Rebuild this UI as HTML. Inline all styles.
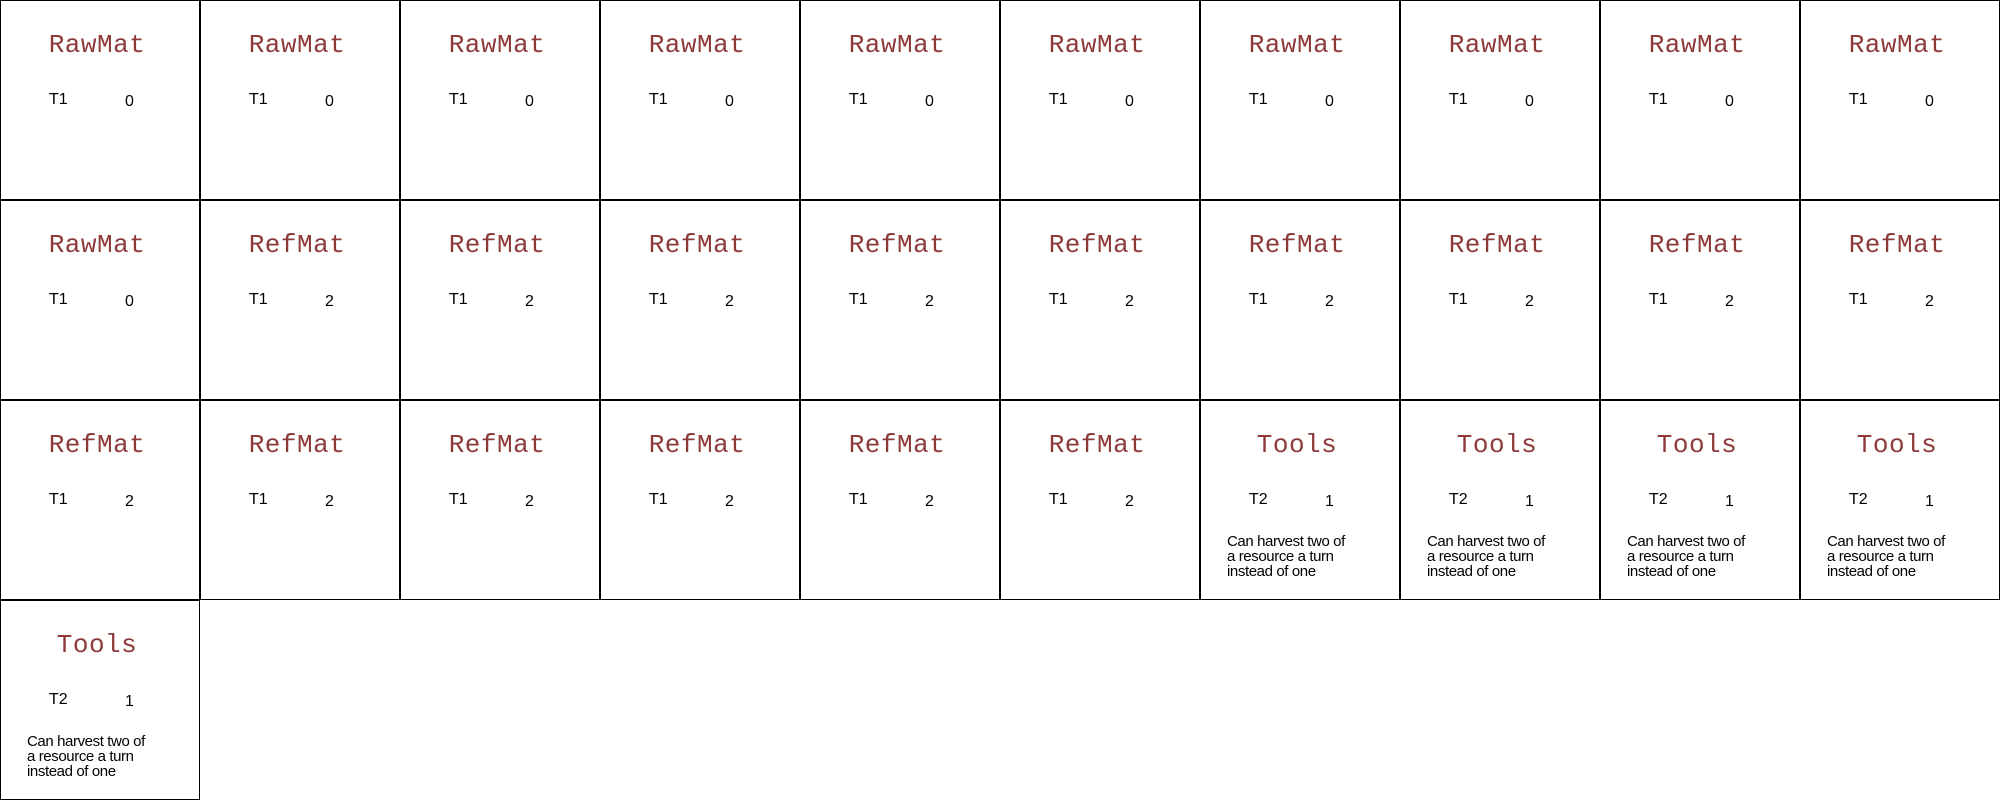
<!DOCTYPE html>
<html><head><style>
body{margin:0;width:2000px;height:800px;background:#fff;position:relative;overflow:hidden;font-family:"Liberation Sans",sans-serif}
.c{position:absolute;width:200px;height:200px;box-sizing:border-box;border:1px solid #000}
.t{position:absolute;left:0;width:192px;text-align:center;top:29px;font-family:"Liberation Mono",monospace;font-size:26px;color:#8e3a3a;line-height:30px;letter-spacing:0.5px}
.a{position:absolute;left:48px;top:90px;font-size:16px;line-height:18px}
.b{position:absolute;left:124px;top:92px;font-size:16px;line-height:18px}
.d{position:absolute;left:26px;top:133px;font-size:15px;line-height:15px;width:170px;letter-spacing:-0.4px}
</style></head><body>
<script>
var h='';
for(var i=0;i<31;i++){
 var r=Math.floor(i/10),col=i%10;
 var name=i<11?'RawMat':(i<26?'RefMat':'Tools');
 var tier=i<26?'T1':'T2';
 var v=i<11?'0':(i<26?'2':'1');
 h+='<div class="c" style="left:'+(col*200)+'px;top:'+(r*200)+'px"><div class="t">'+name+'</div><div class="a">'+tier+'</div><div class="b">'+v+'</div>'+(i>=26?'<div class="d">Can harvest two of<br>a resource a turn<br>instead of one</div>':'')+'</div>';
}
document.write(h);
</script>
</body></html>
